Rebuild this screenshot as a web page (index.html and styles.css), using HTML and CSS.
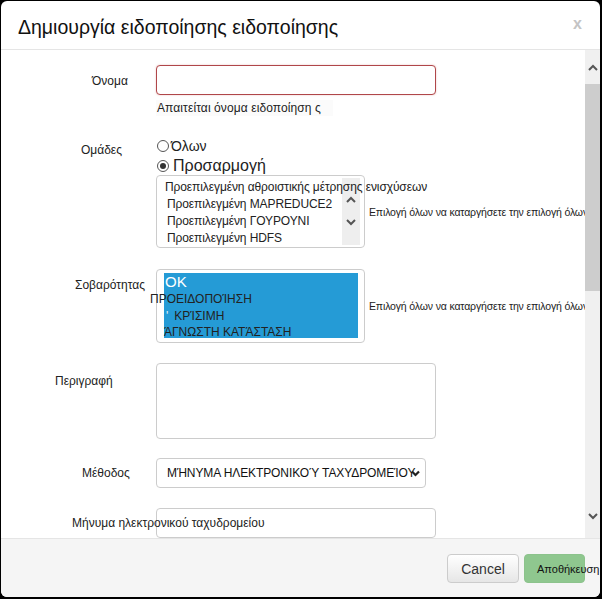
FILE: index.html
```html
<!DOCTYPE html>
<html lang="el">
<head>
<meta charset="utf-8">
<title>Δημιουργία ειδοποίησης</title>
<link rel="stylesheet" href="styles.css">
</head>
<body>
<div class="dialog">
  <div class="header">
    <h1 class="title">Δημιουργία ειδοποίησης ειδοποίησης</h1>
    <span class="close">x</span>
  </div>
  <div class="body">
    <div class="form">
      <div class="row row-name">
        <div class="label lbl-name">Όνομα</div>
        <div class="control">
          <div class="input input-error"></div>
          <div class="help-error">Απαιτείται όνομα ειδοποίηση ς</div>
        </div>
      </div>

      <div class="row row-groups">
        <div class="label lbl-groups">Ομάδες</div>
        <div class="control">
          <div class="radio-line"><span class="radio"></span><span>Όλων</span></div>
          <div class="radio-line radio-line-big"><span class="radio radio-checked"></span><span>Προσαρμογή</span></div>
          <div class="list-row">
            <div class="listbox">
              <div class="list-items">
                <div class="item item-first">Προεπιλεγμένη αθροιστικής μέτρησης ενισχύσεων</div>
                <div class="item">Προεπιλεγμένη MAPREDUCE2</div>
                <div class="item">Προεπιλεγμένη ΓΟΥΡΟΥΝΙ</div>
                <div class="item">Προεπιλεγμένη HDFS</div>
              </div>
              <div class="list-scroll">
                <svg width="10" height="7" viewBox="0 0 10 7"><path d="M1 6 L5 2 L9 6" fill="none" stroke="#555" stroke-width="2"/></svg>
                <svg width="10" height="7" viewBox="0 0 10 7"><path d="M1 1 L5 5 L9 1" fill="none" stroke="#555" stroke-width="2"/></svg>
              </div>
            </div>
            <div class="select-all">Επιλογή όλων να καταργήσετε την επιλογή όλων</div>
          </div>
        </div>
      </div>

      <div class="row row-severity">
        <div class="label lbl-severity">Σοβαρότητας</div>
        <div class="control">
          <div class="list-row">
            <div class="sevbox">
              <div class="sevsel">
                <div class="sev sev-ok">OK</div>
                <div class="sev sev-warn">ΠΡΟΕΙΔΟΠΟΊΗΣΗ</div>
                <div class="sev sev-crit"><span class="tick">'</span>ΚΡΊΣΙΜΗ</div>
                <div class="sev sev-unknown">ΆΓΝΩΣΤΗ ΚΑΤΆΣΤΑΣΗ</div>
              </div>
            </div>
            <div class="select-all">Επιλογή όλων να καταργήσετε την επιλογή όλων</div>
          </div>
        </div>
      </div>

      <div class="row row-desc">
        <div class="label lbl-desc">Περιγραφή</div>
        <div class="control">
          <div class="textarea"></div>
        </div>
      </div>

      <div class="row row-method">
        <div class="label lbl-method">Μέθοδος</div>
        <div class="control">
          <div class="select">
            <span class="select-text">ΜΉΝΥΜΑ ΗΛΕΚΤΡΟΝΙΚΟΎ ΤΑΧΥΔΡΟΜΕΊΟΥ</span>
            <svg class="select-caret" width="9" height="7" viewBox="0 0 9 7"><path d="M1 1.5 L4.5 5 L8 1.5" fill="none" stroke="#222" stroke-width="2.2"/></svg>
          </div>
        </div>
      </div>

      <div class="row row-email">
        <div class="label lbl-email">Μήνυμα ηλεκτρονικού ταχυδρομείου</div>
        <div class="control">
          <div class="input"></div>
        </div>
      </div>
    </div>
    <div class="scrollbar">
      <div class="sb-btn">
        <svg width="10" height="7" viewBox="0 0 10 7"><path d="M1 6 L5 2 L9 6" fill="none" stroke="#555" stroke-width="2"/></svg>
      </div>
      <div class="sb-track"><div class="sb-thumb"></div></div>
      <div class="sb-btn sb-btn-down">
        <svg width="10" height="7" viewBox="0 0 10 7"><path d="M1 1 L5 5 L9 1" fill="none" stroke="#555" stroke-width="2"/></svg>
      </div>
    </div>
  </div>
  <div class="footer">
    <button class="btn btn-cancel">Cancel</button>
    <button class="btn btn-save">Αποθήκευση</button>
  </div>
</div>
</body>
</html>
```

FILE: styles.css
```css
html, body {
  margin: 0;
  padding: 0;
  background: #000;
  height: 100%;
}
body {
  font-family: "Liberation Sans", Arial, sans-serif;
  color: #222;
  overflow: hidden;
}
.dialog {
  margin: 1px 2px 0 1px;
  width: 599px;
  height: 596px;
  background: #fff;
  border-radius: 6px;
  overflow: hidden;
  display: flex;
  flex-direction: column;
}
.header {
  height: 49px;
  box-sizing: border-box;
  flex: none;
  border-bottom: 1px solid #e5e5e5;
  display: flex;
  align-items: center;
  justify-content: space-between;
  padding: 0 18px 0 17px;
}
.title {
  margin: 0;
  font-size: 19.5px;
  font-weight: normal;
  color: #111;
  padding-top: 4px;
}
.close {
  font-size: 16px;
  font-weight: bold;
  color: #c4c4c4;
  margin-top: -3px;
}
.body {
  flex: 1;
  display: flex;
  overflow: hidden;
  min-height: 0;
}
.form {
  flex: 1;
  padding-top: 15px;
  min-width: 0;
}
.row {
  display: flex;
}
.label {
  width: 155px;
  flex: none;
  font-size: 12px;
  line-height: 14px;
  white-space: nowrap;
  position: relative;
  z-index: 1;
  box-sizing: border-box;
}
.control {
  flex: 1;
  min-width: 0;
}
.lbl-name { padding: 9px 0 0 91px; }
.lbl-groups { padding: 5px 0 0 80px; }
.lbl-severity { padding: 9px 0 0 74px; }
.lbl-desc { padding: 11px 0 0 54px; }
.lbl-method { padding: 8px 0 0 81px; }
.lbl-email { padding: 8px 0 0 71px; }

.input {
  width: 280px;
  height: 30px;
  box-sizing: border-box;
  border: 1px solid #ccc;
  border-radius: 4px;
  background: #fff;
}
.input-error {
  border-color: #b0474a;
  box-shadow: 0 0 2px rgba(185, 74, 72, 0.35);
}
.help-error {
  margin-top: 5px;
  font-size: 12px;
  line-height: 16px;
  padding-left: 1px;
  color: #222;
  width: 176px;
  background: #fbfbfb;
  white-space: nowrap;
  letter-spacing: 0.1px;
}
.row-groups { margin-top: 22px; }
.radio-line {
  display: flex;
  align-items: center;
  font-size: 14px;
  line-height: 16px;
  color: #222;
}
.radio-line-big {
  font-size: 16px;
  line-height: 18px;
  margin-top: 3px;
}
.radio {
  width: 10px;
  height: 10px;
  border: 1px solid #555;
  border-radius: 50%;
  margin: 0 2px 0 1px;
  box-sizing: content-box;
  display: inline-flex;
  align-items: center;
  justify-content: center;
  background: #fff;
}
.radio-checked::after {
  content: "";
  width: 6px;
  height: 6px;
  border-radius: 50%;
  background: #333;
}
.radio-line-big .radio { margin-right: 4px; }
.list-row {
  display: flex;
  align-items: center;
  gap: 4px;
}
.listbox {
  width: 209px;
  height: 73px;
  box-sizing: border-box;
  border: 1px solid #ccc;
  border-radius: 4px;
  display: flex;
  padding: 2px 4px 2px 0;
  flex: none;
}
.list-items {
  flex: 1;
  min-width: 0;
  position: relative;
  z-index: 1;
  padding-top: 1px;
  font-size: 12px;
  line-height: 17px;
  white-space: nowrap;
  letter-spacing: -0.1px;
}
.item { padding-left: 10px; }
.item-first { padding-left: 8px; }
.list-scroll {
  width: 18px;
  flex: none;
  background: #eee;
  display: flex;
  flex-direction: column;
  align-items: center;
  justify-content: center;
  gap: 16px;
  padding-bottom: 2px;
  box-sizing: border-box;
}
.select-all {
  font-size: 10.5px;
  white-space: nowrap;
  color: #222;
  letter-spacing: -0.15px;
}
.row-severity { margin-top: 21px; }
.sevbox {
  width: 209px;
  height: 74px;
  box-sizing: border-box;
  border: 1px solid #ccc;
  border-radius: 4px;
  padding: 3px 6px 4px 7px;
  flex: none;
}
.sevsel {
  background: #259bd6;
  height: 100%;
  white-space: nowrap;
}
.sev {
  font-size: 12px;
  line-height: 17px;
  color: #222;
}
.sev-ok {
  font-size: 15px;
  line-height: 18px;
  color: #fff;
  padding-left: 1px;
}
.sev-warn { margin-left: -14px; }
.sev-crit { padding-left: 2px; }
.tick { color: #e8f4fb; margin-right: 6px; }
.sev-unknown { padding-left: 0; line-height: 15px; }
.row-desc { margin-top: 20px; }
.textarea {
  width: 280px;
  height: 76px;
  box-sizing: border-box;
  border: 1px solid #ccc;
  border-radius: 4px;
}
.row-method { margin-top: 19px; }
.select {
  width: 270px;
  height: 30px;
  box-sizing: border-box;
  border: 1px solid #ccc;
  border-radius: 4px;
  display: flex;
  align-items: center;
  padding-left: 10px;
  font-size: 12px;
  white-space: nowrap;
  color: #111;
}
.select-text { letter-spacing: -0.1px; }
.select-caret { margin-left: -4px; flex: none; }
.row-email { margin-top: 20px; }

.scrollbar {
  width: 15px;
  flex: none;
  background: #f0f0f0;
  display: flex;
  flex-direction: column;
}
.sb-btn {
  height: 34px;
  display: flex;
  align-items: center;
  justify-content: center;
  flex: none;
}
.sb-btn-down {
  height: 34px;
  align-items: flex-start;
  padding-top: 9px;
  box-sizing: border-box;
}
.sb-track { flex: 1; }
.sb-thumb {
  height: 207px;
  background: #cdcdcd;
}
.footer {
  height: 59px;
  box-sizing: border-box;
  flex: none;
  border-top: 1px solid #e5e5e5;
  background: #f5f5f5;
  display: flex;
  justify-content: flex-end;
  align-items: flex-start;
  padding: 15px 15px 0 0;
  gap: 5px;
}
.btn {
  font-family: "Liberation Sans", Arial, sans-serif;
  height: 29px;
  border-radius: 4px;
  padding: 0;
  cursor: pointer;
}
.btn-cancel {
  width: 72px;
  font-size: 14px;
  color: #333;
  border: 1px solid #ccc;
  background: linear-gradient(#ffffff, #e6e6e6);
}
.btn-save {
  width: 61px;
  font-size: 11px;
  color: #111;
  border: 1px solid #8cc38c;
  background: #8fc78f;
  text-align: left;
  padding-left: 12px;
  white-space: nowrap;
  overflow: visible;
}
```
